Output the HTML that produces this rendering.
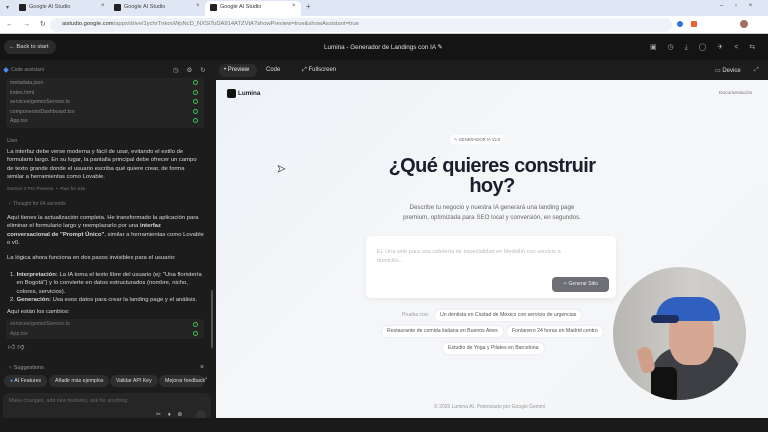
<!DOCTYPE html>
<html><head><meta charset="utf-8"><style>
*{margin:0;padding:0;box-sizing:border-box}
body{width:768px;height:432px;overflow:hidden;position:relative;font-family:"Liberation Sans",sans-serif;background:#1c1c1c}
.a{position:absolute}
.t{white-space:nowrap}
.lt{color:#d8d8d8;font-size:5.9px;line-height:8.3px}
.chip{position:absolute;background:#fff;border-radius:8px;font-size:5.2px;color:#555;padding:0 5px;height:11px;line-height:11px;white-space:nowrap;box-shadow:0 0 2px #dde}
.sg{position:absolute;background:#2e2e30;border-radius:8px;font-size:5.2px;color:#ddd;height:12px;line-height:12px;padding:0 6px;white-space:nowrap}
.ck{position:absolute;width:5px;height:5px;border-radius:50%;border:1.2px solid #3bbf5a;left:193px}
</style></head><body>
<div class="a" style="left:0;top:0;width:768px;height:16px;background:#dfe7f5"></div>
<div class="a t" style="left:6px;top:4px;font-size:6px;color:#555">▾</div>
<div class="a" style="left:19px;top:4px;width:7px;height:7px;background:#222;border-radius:1px"></div>
<div class="a t" style="left:29px;top:4px;font-size:5.5px;color:#444">Google AI Studio</div>
<div class="a t" style="left:101px;top:3px;font-size:6px;color:#555">×</div>
<div class="a" style="left:114px;top:4px;width:7px;height:7px;background:#222;border-radius:1px"></div>
<div class="a t" style="left:124px;top:4px;font-size:5.5px;color:#444">Google AI Studio</div>
<div class="a t" style="left:196px;top:3px;font-size:6px;color:#555">×</div>
<div class="a" style="left:205px;top:1px;width:96px;height:16px;background:#fff;border-radius:5px 5px 0 0"></div>
<div class="a" style="left:210px;top:4px;width:7px;height:7px;background:#222;border-radius:1px"></div>
<div class="a t" style="left:220px;top:4px;font-size:5.5px;color:#333">Google AI Studio</div>
<div class="a t" style="left:292px;top:3px;font-size:6px;color:#555">×</div>
<div class="a t" style="left:306px;top:2px;font-size:8px;color:#555">+</div>
<div class="a t" style="left:720px;top:3px;font-size:6px;color:#444;word-spacing:10px">– ▫ ×</div>
<div class="a" style="left:0;top:16px;width:768px;height:18px;background:#fff;border-bottom:1px solid #ccc"></div>
<div class="a t" style="left:6px;top:20px;font-size:7px;color:#555;word-spacing:8px">← → ↻</div>
<div class="a" style="left:50px;top:18px;width:622px;height:14px;background:#eef1f7;border-radius:7px"></div>
<div class="a t" style="left:62px;top:21px;font-size:5.8px;color:#333">aistudio.google.com<span style="color:#777">/apps/drive/1ychrTnkooWpNcD_NXSiToDA914ATZVtA?showPreview=true&amp;showAssistant=true</span></div>
<div class="a" style="left:677px;top:21px;width:6px;height:6px;background:#2f6fe0;border-radius:50%"></div>
<div class="a" style="left:691px;top:21px;width:6px;height:6px;background:#e8623a;border-radius:1px"></div>
<div class="a" style="left:740px;top:20px;width:8px;height:8px;background:#a07060;border-radius:50%"></div>
<div class="a" style="left:0;top:34px;width:768px;height:26px;background:#141414"></div>
<div class="a t" style="left:4px;top:40px;width:52px;height:14px;background:#2a2a2a;border-radius:7px;font-size:5.8px;color:#ddd;line-height:14px;padding-left:5px">← Back to start</div>
<div class="a t" style="left:324px;top:44px;font-size:6.3px;color:#e0e0e0">Lumina - Generador de Landings con IA ✎</div>
<div class="a t" style="left:650px;top:43px;font-size:7px;color:#aaa;word-spacing:9px">▣ ◷ ⤓ ◯ ✈ &lt; ⇆</div>
<div class="a" style="left:0;top:60px;width:768px;height:20px;background:#1d1d1d"></div>
<div class="a" style="left:4px;top:68px;width:4px;height:4px;background:#4a8cf0;transform:rotate(45deg)"></div>
<div class="a t" style="left:11px;top:67px;font-size:5px;color:#888">Code assistant</div>
<div class="a t" style="left:173px;top:66px;font-size:6.5px;color:#aaa;word-spacing:6px">◷ ⚙ ↻</div>
<div class="a t" style="left:219px;top:64px;width:38px;height:13px;background:#2c2c2c;border-radius:6px;font-size:6px;color:#eee;line-height:13px;padding-left:5px">• Preview</div>
<div class="a t" style="left:266px;top:67px;font-size:6px;color:#ddd">Code</div>
<div class="a t" style="left:302px;top:67px;font-size:6px;color:#ddd">⤢ Fullscreen</div>
<div class="a t" style="left:715px;top:67px;font-size:6px;color:#ddd">▭ Device</div>
<div class="a t" style="left:754px;top:67px;font-size:6px;color:#aaa">⤢</div>
<div class="a" style="left:0;top:80px;width:214px;height:338px;background:#1c1c1c"></div>
<div class="a" style="left:6px;top:78px;width:198px;height:50px;background:#242424;border-radius:4px"></div>
<div class="a lt t" style="left:10px;top:79px;color:#888;font-size:5.3px;line-height:9.6px">metadata.json<br>index.html<br>services/geminiService.ts<br>components/Dashboard.tsx<br>App.tsx</div>
<div class="ck" style="top:80px"></div><div class="ck" style="top:90px"></div><div class="ck" style="top:99px"></div><div class="ck" style="top:109px"></div><div class="ck" style="top:118px"></div>
<div class="a t" style="left:7px;top:138px;font-size:5px;color:#888">User</div>
<div class="a lt t" style="left:7px;top:148px">La interfaz debe verse moderna y fácil de usar, evitando el estilo de<br>formulario largo. En su lugar, la pantalla principal debe ofrecer un campo<br>de texto grande donde el usuario escriba qué quiere crear, de forma<br>similar a herramientas como Lovable.</div>
<div class="a t" style="left:7px;top:187px;font-size:4.8px;color:#777">Gemini 3 Pro Preview &nbsp;•&nbsp; Ran for 64s</div>
<div class="a t" style="left:8px;top:201px;font-size:5px;color:#777">♀ Thought for 64 seconds</div>
<div class="a lt t" style="left:7px;top:214px">Aquí tienes la actualización completa. He transformado la aplicación para<br>eliminar el formulario largo y reemplazarlo por una <b>interfaz</b><br><b>conversacional de "Prompt Único"</b>, similar a herramientas como Lovable<br>o v0.</div>
<div class="a lt t" style="left:7px;top:254px">La lógica ahora funciona en dos pasos invisibles para el usuario:</div>
<div class="a lt t" style="left:10px;top:271px">1. <b>Interpretación:</b> La IA toma el texto libre del usuario (ej: "Una floristería<br>&nbsp;&nbsp;&nbsp;&nbsp;en Bogotá") y lo convierte en datos estructurados (nombre, nicho,<br>&nbsp;&nbsp;&nbsp;&nbsp;colores, servicios).<br>2. <b>Generación:</b> Usa esos datos para crear la landing page y el análisis.</div>
<div class="a lt t" style="left:7px;top:308px">Aquí están los cambios:</div>
<div class="a" style="left:6px;top:319px;width:198px;height:20px;background:#242424;border-radius:3px"></div>
<div class="a t" style="left:10px;top:320px;font-size:5.3px;color:#777;line-height:9.6px">services/geminiService.ts<br>App.tsx</div>
<div class="ck" style="top:322px"></div><div class="ck" style="top:331px"></div>
<div class="a t" style="left:8px;top:342px;font-size:7px;color:#bbb">👍︎ 👎︎</div>
<div class="a" style="left:211px;top:290px;width:2px;height:58px;background:#555;border-radius:1px"></div>
<div class="a t" style="left:8px;top:365px;font-size:5.5px;color:#999">♀ Suggestions</div>
<div class="a t" style="left:200px;top:364px;font-size:7px;color:#bbb">×</div>
<div class="sg" style="left:4px;top:375px"><span style="color:#4a8cf0">●</span> AI Features</div>
<div class="sg" style="left:49px;top:375px">Añadir más ejemplos</div>
<div class="sg" style="left:110px;top:375px">Validar API Key</div>
<div class="sg" style="left:159px;top:375px;width:46px;overflow:hidden">Mejorar feedback</div>
<div class="a t" style="left:205px;top:376px;font-size:6px;color:#ccc">›</div>
<div class="a" style="left:3px;top:393px;width:208px;height:36px;background:#262626;border-radius:6px"></div>
<div class="a t" style="left:9px;top:398px;font-size:5.3px;color:#666">Make changes, add new features, ask for anything</div>
<div class="a t" style="left:156px;top:411px;font-size:6px;color:#bbb;word-spacing:5px">✂ ♦ ⊕</div>
<div class="a" style="left:196px;top:410px;width:10px;height:10px;background:#333;border-radius:50%"></div>
<div class="a" style="left:216px;top:80px;width:552px;height:338px;background:linear-gradient(135deg,#eef2f8,#f5f6f8 40%,#f4f5f7)"></div>
<div class="a" style="left:227px;top:89px;width:9px;height:9px;background:#111;border-radius:2px"></div>
<div class="a t" style="left:238px;top:90px;font-size:6.3px;color:#222;font-weight:bold">Lumina</div>
<div class="a t" style="left:719px;top:91px;font-size:4.8px;color:#777">Documentación</div>
<div class="a t" style="left:450px;top:135px;height:9px;line-height:9px;background:#fff;border-radius:5px;padding:0 4px;font-size:4.2px;color:#666"><span style="color:#5a7ad8">✎</span> GENERADOR IA V2.0</div>
<div class="a" style="left:216px;top:156px;width:552px;text-align:center;font-size:20px;line-height:20px;font-weight:bold;color:#1a1f2e;letter-spacing:-0.6px">¿Qué quieres construir<br>hoy?</div>
<div class="a" style="left:216px;top:203px;width:552px;text-align:center;font-size:6.2px;line-height:9.5px;color:#666">Describe tu negocio y nuestra IA generará una landing page<br>premium, optimizada para SEO local y conversión, en segundos.</div>
<div class="a" style="left:366px;top:236px;width:250px;height:62px;background:#fff;border-radius:5px;box-shadow:0 2px 6px rgba(0,0,0,.06)"></div>
<div class="a t" style="left:377px;top:248px;font-size:5.6px;line-height:9px;color:#bbb">Ej. Una web para una cafetería de especialidad en Medellín con servicio a<br>domicilio...</div>
<div class="a t" style="left:552px;top:277px;width:57px;height:15px;background:#6e6f76;border-radius:4px;font-size:5px;color:#eee;line-height:15px;text-align:center">✧ Generar Sitio</div>
<div class="a t" style="left:402px;top:312px;font-size:5px;color:#999">Prueba con:</div>
<div class="chip" style="left:435px;top:310px">Un dentista en Ciudad de México con servicio de urgencias</div>
<div class="chip" style="left:382px;top:326px">Restaurante de comida italiana en Buenos Aires</div>
<div class="chip" style="left:507px;top:326px">Fontanero 24 horas en Madrid centro</div>
<div class="chip" style="left:443px;top:343px">Estudio de Yoga y Pilates en Barcelona</div>
<div class="a t" style="left:434px;top:404px;font-size:5px;color:#999">© 2025 Lumina AI. Potenciado por Google Gemini</div>
<div class="a" style="left:0;top:418px;width:768px;height:14px;background:#1a1a1a"></div>
<div class="a t" style="left:277px;top:164px;font-size:10px;color:#fff;-webkit-text-stroke:0.6px #333">➤</div>
<div class="a" style="left:613px;top:267px;width:133px;height:133px;border-radius:50%;overflow:hidden;background:linear-gradient(90deg,#b8b6b2,#d0cecb 60%,#c8c6c2)">
 <div class="a" style="left:38px;top:80px;width:90px;height:60px;background:#3e3f44;border-radius:30px 30px 0 0"></div>
 <div class="a" style="left:56px;top:40px;width:45px;height:58px;background:#d5a894;border-radius:40%"></div>
 <div class="a" style="left:43px;top:30px;width:64px;height:24px;background:#2f5fbf;border-radius:30px 30px 4px 4px"></div>
 <div class="a" style="left:38px;top:48px;width:28px;height:8px;background:#1d2f5f;border-radius:5px"></div>
 <div class="a" style="left:38px;top:100px;width:26px;height:36px;background:#111;border-radius:6px"></div>
 <div class="a" style="left:26px;top:80px;width:14px;height:26px;background:#cf9f8a;border-radius:6px;transform:rotate(-15deg)"></div>
</div>
</body></html>
